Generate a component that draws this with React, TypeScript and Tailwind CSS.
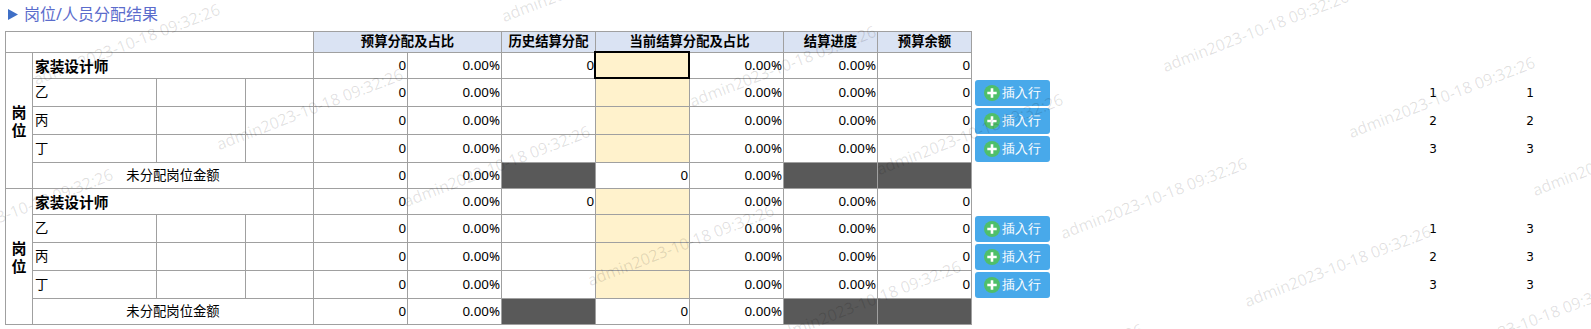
import React from "react";

const marks: [number, number][] = [
  [37, 85], [220, 150], [407, 207], [591, 286], [778, 342],
  [505, 22], [693, 107], [880, 175], [1064, 239], [1248, 307],
  [1166, 72], [1352, 138], [1536, 196], [-70, 250], [1440, 362], [960, 405],
];

const side = [
  null, null, [1, 1], [2, 2], [3, 3], null,
  null, [1, 3], [2, 3], [3, 3], null,
];

function Cell({
  className = "",
  children,
}: {
  className?: string;
  children?: React.ReactNode;
}) {
  return (
    <div className={`border-r border-b border-[#a0a0a0] flex items-center ${className}`}>
      {children}
    </div>
  );
}

function Num({ v, bg = "bg-white" }: { v?: string; bg?: string }) {
  return <Cell className={`justify-end pr-px ${bg}`}>{v}</Cell>;
}

function Dark() {
  return <Cell className="bg-[#595959]" />;
}

function GroupRows({ first }: { first: boolean }) {
  const subs = ["乙", "丙", "丁"];
  return (
    <>
      {/* 岗位 label */}
      <Cell className="row-span-5 justify-center bg-white">
        <div className="text-[15px] font-bold leading-[18px] text-black text-center">
          <div>岗</div>
          <div>位</div>
        </div>
      </Cell>

      {/* 家装设计师 */}
      <Cell className="col-span-3 pl-[2px] bg-white text-[14.67px] font-bold">家装设计师</Cell>
      <Num v="0" />
      <Num v="0.00%" />
      <Num v="0" />
      <Cell className="relative bg-[#fff2cc]">
        {first && (
          <div className="absolute -left-[2px] -top-[2px] -right-px -bottom-px border-2 border-black" />
        )}
      </Cell>
      <Num v="0.00%" />
      <Num v="0.00%" />
      <Num v="0" />

      {subs.map((s) => (
        <React.Fragment key={s}>
          <Cell className="pl-[2px] bg-white">{s}</Cell>
          <Cell className="bg-white" />
          <Cell className="bg-white" />
          <Num v="0" />
          <Num v="0.00%" />
          <Num />
          <Num bg="bg-[#fff2cc]" />
          <Num v="0.00%" />
          <Num v="0.00%" />
          <Num v="0" />
        </React.Fragment>
      ))}

      {/* 未分配岗位金额 */}
      <Cell className="col-span-3 justify-center bg-white">未分配岗位金额</Cell>
      <Num v="0" />
      <Num v="0.00%" />
      <Dark />
      <Num v="0" />
      <Num v="0.00%" />
      <Dark />
      <Dark />
    </>
  );
}

function InsertButton() {
  return (
    <button className="ml-[3px] h-[26px] w-[75px] rounded-[3px] bg-[#48a9ea] flex items-center justify-center gap-[2px] text-white text-[13px]">
      <svg className="h-[16px] w-[16px] shrink-0" viewBox="0 0 16 16">
        <circle cx="8" cy="8" r="8" fill="#4fbf6a" />
        <path d="M8 3.3v9.4M3.3 8h9.4" stroke="#fff" strokeWidth="2.6" />
      </svg>
      <span>插入行</span>
    </button>
  );
}

export default function App() {
  return (
    <div
      className="relative h-[329px] w-[1591px] overflow-hidden bg-white text-black text-[13.33px]"
      style={{ fontFamily: '"Noto Sans", "Noto Sans CJK SC", sans-serif' }}
    >
      {/* Title */}
      <div className="h-[31px] pb-[3px] pl-[8px] flex items-center gap-[6px]">
        <svg width="10" height="11" viewBox="0 0 10 11">
          <path d="M0 0L10 5.5L0 11Z" fill="#3f6fc6" />
        </svg>
        <span className="text-[16px] text-[#5b6ccc]">岗位/人员分配结果</span>
      </div>

      <div className="flex items-start pl-[5px]">
        {/* Main table */}
        <div className="grid grid-cols-[27px_124px_89px_68px_94px_94px_94px_94px_94px_94px_94px] grid-rows-[21px_26px_28px_28px_28px_26px_26px_28px_28px_28px_26px] border-l border-t border-[#a0a0a0]">
          <Cell className="col-span-4 bg-white" />
          <Cell className="col-span-2 justify-center bg-[#dae3f3] font-bold">预算分配及占比</Cell>
          <Cell className="justify-center bg-[#dae3f3] font-bold">历史结算分配</Cell>
          <Cell className="col-span-2 justify-center bg-[#dae3f3] font-bold">当前结算分配及占比</Cell>
          <Cell className="justify-center bg-[#dae3f3] font-bold">结算进度</Cell>
          <Cell className="justify-center bg-[#dae3f3] font-bold">预算余额</Cell>

          <GroupRows first />
          <GroupRows first={false} />
        </div>

        {/* Action / index columns */}
        <div
          className="mt-px grid grid-cols-[80px_351px_60px_37px_60px] grid-rows-[21px_26px_28px_28px_28px_26px_26px_28px_28px_28px_26px] text-[12px]"
          style={{ fontFamily: '"DejaVu Sans", sans-serif' }}
        >
          {side.map((r, i) => (
            <React.Fragment key={i}>
              <div className="flex items-center">{r && <InsertButton />}</div>
              <div />
              <div className="flex items-center justify-center">{r ? r[0] : ""}</div>
              <div />
              <div className="flex items-center justify-center">{r ? r[1] : ""}</div>
            </React.Fragment>
          ))}
        </div>
      </div>

      {/* Watermark */}
      <div className="pointer-events-none absolute inset-0 overflow-hidden">
        {marks.map(([x, y], i) => (
          <span
            key={i}
            className="absolute whitespace-nowrap text-[16px] leading-none text-black/[0.12] origin-[0_100%] -rotate-[21deg]"
            style={{ left: x, top: y - 14, fontFamily: '"Open Sans", sans-serif' }}
          >
            admin2023-10-18 09:32:26
          </span>
        ))}
      </div>
    </div>
  );
}
